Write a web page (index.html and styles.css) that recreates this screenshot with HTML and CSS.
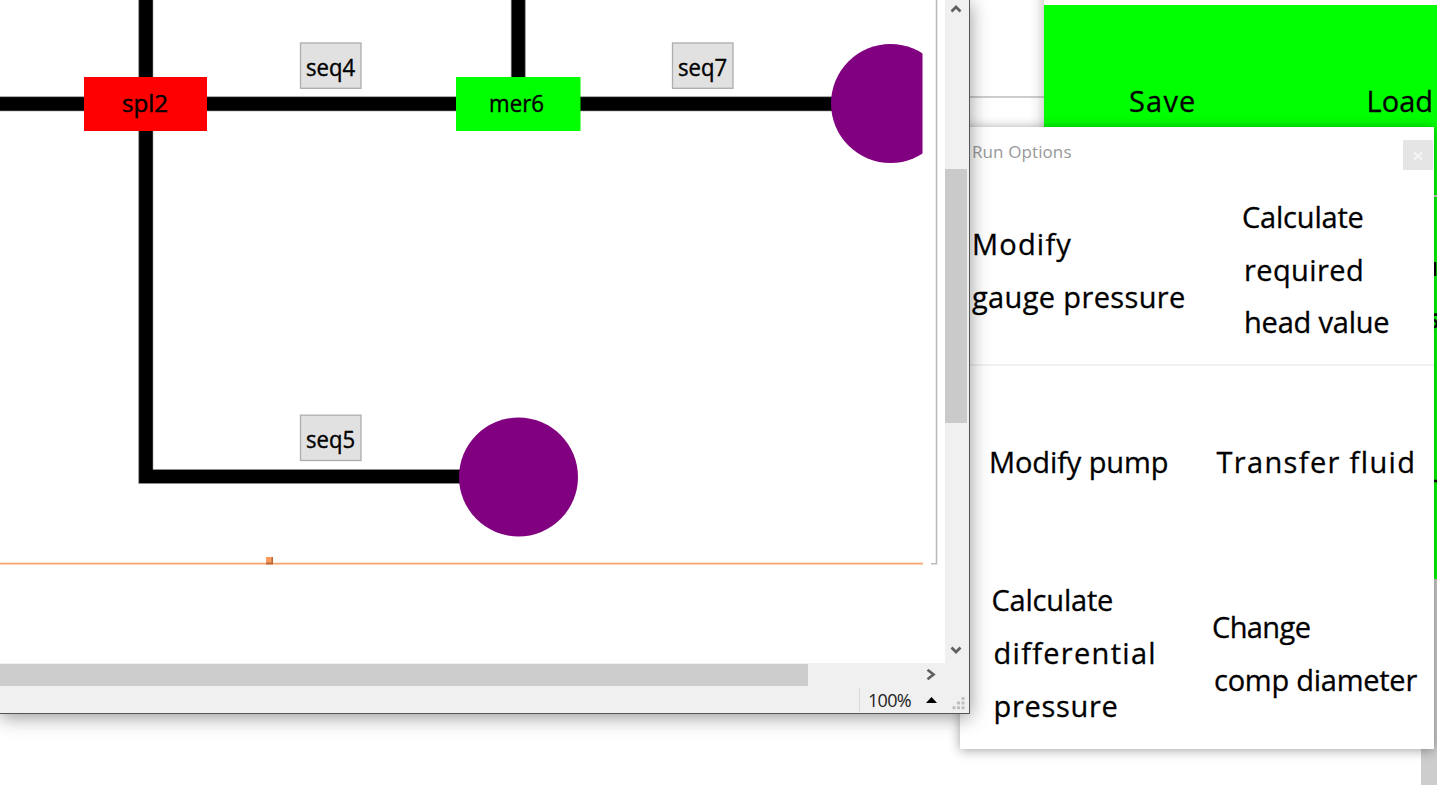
FILE: index.html
```
<!DOCTYPE html>
<html lang="en">
<head>
<meta charset="utf-8">
<title>Run Options</title>
<link rel="stylesheet" href="styles.css">
</head>
<body>
<div class="desktop">
  <section class="backdrop">
    <div class="backdrop-rule"></div>
  </section>
  <section class="toolbox">
    <div class="toolbox-row toolbox-actions">
      <span class="action save">Save</span>
      <span class="action load">Load</span>
    </div>
    <div class="toolbox-row toolbox-more">
      <svg class="cut-labels" width="6" height="382" viewBox="0 0 6 382">
        <path d="M4 65v14M2 118q3-1 5 0M3 123q3 1 3 4t-3 3M2 284h5" fill="none" stroke="#000" stroke-width="2.500"/>
      </svg>
    </div>
    <div class="toolbox-scroll"></div>
  </section>

  <section class="dialog">
    <header class="dialog-head">
      <h1 class="dialog-title">Run Options</h1>
      <button class="close" aria-label="Close"><svg width="10" height="8" viewBox="0 0 10 8"><path d="M1 0.5L9 7.5M9 0.5L1 7.5" stroke="#f6f6f6" stroke-width="2"/></svg></button>
    </header>
    <div class="options">
      <div class="option"><p class="label w213"><span class="line l-modify">Modify</span><span class="line l-gauge">gauge pressure</span></p></div>
      <div class="option"><p class="label w147"><span class="line l-calc">Calculate</span><span class="line l-required">required</span><span class="line l-head">head value</span></p></div>
      <div class="option"><p class="label w179"><span class="line l-pump">Modify pump</span></p></div>
      <div class="option"><p class="label w199"><span class="line l-fluid">Transfer fluid</span></p></div>
      <div class="option"><p class="label w172"><span class="line l-calc">Calculate</span><span class="line l-diff">differential</span><span class="line l-press">pressure</span></p></div>
      <div class="option"><p class="label w205"><span class="line l-change">Change</span><span class="line l-comp">comp diameter</span></p></div>
    </div>
  </section>

  <section class="editor">
    <div class="editor-body">
      <svg class="diagram" width="945" height="663" viewBox="0 0 945 663">
        <g fill="#000" stroke="#999" stroke-width=".6">
          <path d="M-2 96.700H840V111H-2Z"/>
          <path d="M138.700 -2H153V469.500H470V483.500H138.700Z"/>
          <path d="M511.200 -2H525.300V90H511.200Z"/>
        </g>
        <rect x="84" y="77" width="123" height="54" fill="#f00"/>
        <rect x="456" y="77" width="124.500" height="54" fill="#0f0"/>
        <circle cx="518.500" cy="477" r="59.500" fill="purple"/>
        <clipPath id="page"><rect width="922.500" height="663"/></clipPath>
        <circle cx="890.500" cy="103.500" r="59.500" fill="purple" clip-path="url(#page)"/>
        <g fill="#e1e1e1" stroke="#adadad" stroke-width="1.300">
          <rect x="300.500" y="43" width="60.500" height="45.300"/>
          <rect x="672.500" y="43" width="60.500" height="45.300"/>
          <rect x="300.500" y="415.200" width="60.500" height="45.300"/>
        </g>
        <g class="node-text">
          <text x="122" y="111.500" textLength="46" lengthAdjust="spacingAndGlyphs">spl2</text>
          <text x="489" y="111.500" textLength="55" lengthAdjust="spacingAndGlyphs">mer6</text>
          <text x="306" y="76" textLength="49" lengthAdjust="spacingAndGlyphs">seq4</text>
          <text x="678" y="76" textLength="49" lengthAdjust="spacingAndGlyphs">seq7</text>
          <text x="306" y="448" textLength="49" lengthAdjust="spacingAndGlyphs">seq5</text>
        </g>
        <path d="M936.500 0V563.700H931" fill="none" stroke="#b9b9b9" stroke-width="1.500"/>
        <path d="M0 563.700H923" stroke="#f9a46c" stroke-width="1.700"/>
        <rect x="266" y="557" width="7" height="7.500" fill="#b96b3a"/>
        <rect x="266" y="557" width="5.500" height="5.500" fill="#fb9a5c"/>
      </svg>
      <div class="vbar">
        <svg width="12" height="8" viewBox="0 0 12 8"><path d="M1.500 6.500L6 2L10.500 6.500" class="chev"/></svg>
        <div class="vthumb"></div>
        <svg width="12" height="8" viewBox="0 0 12 8"><path d="M1.500 1.500L6 6L10.500 1.500" class="chev"/></svg>
      </div>
    </div>
    <div class="hbar">
      <div class="hthumb"></div>
      <svg width="10" height="11" viewBox="0 0 10 11"><path d="M1.500 .8L7.500 5.500L1.500 10.200" class="chev"/></svg>
    </div>
    <footer class="status">
      <span class="zoom">100%</span>
      <svg class="caret" width="11" height="6" viewBox="0 0 11 6"><path d="M0 6L5.500 0L11 6Z"/></svg>
      <svg class="grip" width="13" height="13" viewBox="0 0 13 13" fill="#bfbfbf"><path d="M9.500 0h3v3h-3zM9.500 4.600h3v3h-3zM9.500 9.200h3v3h-3zM5 4.600h3v3h-3zM5 9.200h3v3h-3zM.5 9.200h3v3h-3z"/></svg>
    </footer>
  </section>
</div>
</body>
</html>
```
FILE: styles.css
```
* { box-sizing: border-box; }
body { margin: 0; background: #fff; }
.desktop {
  position: relative;
  width: 1437px;
  height: 785px;
  overflow: hidden;
  font-family: "Comic Sans MS", "Open Sans", sans-serif;
  color: #000;
}

/* Windows lie over each other on the desktop */
.backdrop { position: absolute; left: 960px; top: 0; width: 84px; height: 127px; padding-top: 96px; }
.backdrop-rule { height: 2px; background: #cdcdcd; }

.toolbox {
  position: absolute;
  left: 1044px;
  top: 0;
  width: 393px;
  height: 785px;
  padding-top: 5px;
  display: flex;
  flex-direction: column;
}
.toolbox::before {
  content: "";
  position: absolute;
  left: -14px;
  top: 0;
  width: 14px;
  height: 127px;
  background: linear-gradient(to left, rgba(0,0,0,.15), rgba(0,0,0,.04) 50%, transparent);
}
.toolbox-row { background: #0f0; }
.toolbox-actions { height: 190px; display: flex; padding: 76px 0 0 85px; justify-content: space-between; }
.toolbox-more { height: 384px; border-top: 2px solid #d0d0d0; display: flex; justify-content: flex-end; }
.action { font-size: 29px; line-height: 40px; white-space: nowrap; -webkit-text-stroke: .3px #000; }
.save { letter-spacing: 1.200px; }
.load { margin-right: 4px; }
.toolbox-scroll { width: 16px; flex: 1; align-self: flex-end; background: #cdcdcd; }

.dialog {
  position: absolute;
  left: 960px;
  top: 127px;
  width: 474px;
  height: 622px;
  background: #fff;
  box-shadow: 0 1px 11px rgba(0,0,0,.38);
}
.dialog-head { height: 47px; padding: 13px 1px 0 12px; display: flex; justify-content: space-between; }
.dialog-title { margin: 0; font: 400 17px/24px "Open Sans", sans-serif; letter-spacing: .1px; color: #999; }
.close { width: 30px; height: 30px; border: 0; padding: 2px 0 0; background: #e5e5e5; display: flex; align-items: center; justify-content: center; }
.options { display: grid; grid-template-columns: 237px 237px; grid-template-rows: 192px 191px 191px; }
.option { display: flex; align-items: center; justify-content: center; padding-top: 2px; }
.option:nth-child(-n+2) { border-bottom: 2px solid #f1f1f1; }
.option:first-child { padding-top: 4px; }
.label { margin: 0; font-size: 29px; line-height: 52.700px; white-space: nowrap; -webkit-text-stroke: .3px #000; }
.line { display: block; }
.w213 { width: 213px; }
.w147 { width: 147px; }
.w179 { width: 179px; }
.w199 { width: 198px; }
.w172 { width: 174px; }
.w205 { width: 207px; }
.l-required, .l-head, .l-diff, .l-press, .l-comp { padding-left: 2px; }
.l-modify { letter-spacing: 1.200px; }
.l-gauge { letter-spacing: .360px; }
.l-calc { letter-spacing: -.2px; }
.l-required { letter-spacing: .4px; }
.l-head { letter-spacing: -.2px; }
.l-pump { letter-spacing: -.1px; }
.l-fluid { letter-spacing: 1.350px; }
.l-diff { letter-spacing: 1.300px; }
.l-press { letter-spacing: .7px; }
.l-change { letter-spacing: -.6px; }
.l-comp { letter-spacing: -.250px; }

.editor {
  position: absolute;
  left: 0;
  top: 0;
  width: 970px;
  height: 714px;
  background: #f0f0f0;
  border-right: 1px solid #555;
  border-bottom: 1px solid #555;
  box-shadow: 0 3px 18px rgba(0,0,0,.42);
}
.editor-body { height: 663px; display: flex; }
.diagram { background: #fff; flex: none; }
.node-text { font-size: 23px; stroke: #000; stroke-width: .4px; }
.vbar { width: 22px; padding: 5px 0 9px; display: flex; flex-direction: column; justify-content: space-between; align-items: center; }
.vthumb { width: 22px; height: 254px; background: #cacaca; margin-bottom: 68px; }
.chev { fill: none; stroke: #606060; stroke-width: 2.700px; }
.hbar { height: 23px; display: flex; align-items: center; gap: 118px; }
.hthumb { width: 808px; height: 22px; background: #cdcdcd; }
.status { height: 27px; display: flex; align-items: center; justify-content: flex-end; padding-right: 4px; font: 400 18px/24px "Open Sans", sans-serif; color: #222; }
.zoom { border-left: 1px solid #d7d7d7; padding-left: 8px; letter-spacing: -.7px; }
.caret { margin: 0 15px 0 15px; }
.grip { margin-top: 8px; }
```
